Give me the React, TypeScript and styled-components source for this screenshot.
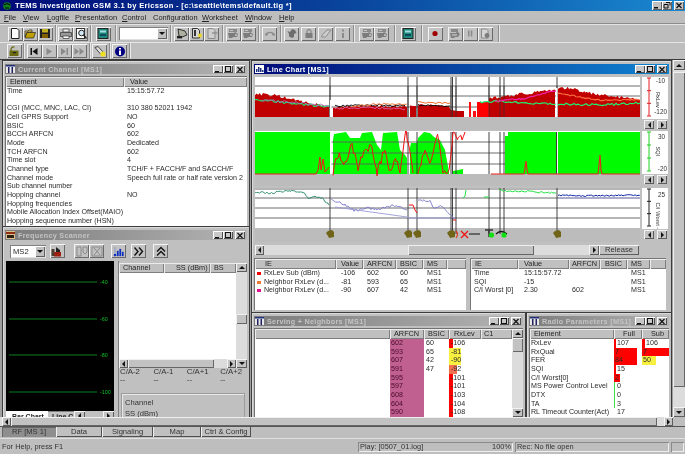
import React from "react";
import styled, { createGlobalStyle } from "styled-components";

const Global = createGlobalStyle`
  html, body { margin: 0; padding: 0; width: 685px; height: 454px; overflow: hidden; background: #c0c0c0; }
  #root { width: 685px; height: 454px; }
  * { box-sizing: border-box; }
`;

const Screen = styled.div`
  width: 685px; height: 454px; display: flex; flex-direction: column; background: #bebebe; overflow: hidden;
  font-family: "Liberation Sans", Arial, sans-serif; font-size: 7.1px; color: #2a2a2a; filter: blur(0.42px);
`;
const AppTitle = styled.div`
  height: 11px; flex: none; display: flex; align-items: center; padding-left: 3px; gap: 4px; color: #fff; font-weight: bold; font-size: 7.6px; letter-spacing: 0.3px;
  background: linear-gradient(90deg, #000a78 0%, #0a4aa0 55%, #1a88d0 100%);
`;
const AppTitleText = styled.span` flex: 1; white-space: nowrap; `;
const Controls = styled.div` display: flex; margin-right: 1px; `;
const CtrlBtn = styled.div<{ $gap?: number }>`
  width: 10px; height: 9px; margin-left: ${p => p.$gap ?? 0}px; background: #c0c0c0; display: flex; align-items: center; justify-content: center;
  box-shadow: inset 1px 1px #fff, inset -1px -1px #606060;
`;
const MenuBar = styled.div`
  height: 13px; flex: none; display: flex; align-items: center; padding-left: 4px; font-size: 7.5px; color: #222; border-bottom: 1px solid #8c8c8c;
`;
const MenuItem = styled.span<{ $w: number }>` width: ${p => p.$w}px; white-space: nowrap; flex: none; `;
const Underline = styled.u``;
const ToolRow = styled.div<{ $h: number }>`
  height: ${p => p.$h}px; flex: none; display: flex; align-items: center; padding-left: 5px; border-top: 1px solid #e4e4e4;
`;
const Group = styled.div<{ $w: number; $gap?: number; $plain?: boolean }>`
  width: ${p => p.$w}px; height: 100%; display: flex; align-items: center; justify-content: center; gap: ${p => p.$gap ?? 0}px; flex: none;
  ${p => (p.$plain ? "" : "border-right: 1px solid #8e8e8e; box-shadow: 1px 0 #e8e8e8;")}
`;
const Tool = styled.div`
  width: 15px; height: 14px; display: flex; align-items: center; justify-content: center; flex: none; background: #c2c2c2;
  box-shadow: inset 1px 1px #f4f4f4, inset -1px -1px #6a6a6a;
`;
const ToolSpacer = styled.div` width: 5px; `;
const Combo = styled.div<{ $w: number }>`
  width: ${p => p.$w}px; height: 13px; background: #fff; display: flex; align-items: center; justify-content: flex-end; padding-left: 3px; flex: none; font-size: 7.6px;
  box-shadow: inset 1px 1px #808080, inset -1px -1px #e0e0e0;
`;
const ComboText = styled.span` flex: 1; `;
const ComboArrow = styled.div`
  width: 10px; height: 11px; margin-right: 1px; background: #c0c0c0; display: flex; align-items: center; justify-content: center; box-shadow: inset 1px 1px #fff, inset -1px -1px #606060;
`;

const Workspace = styled.div` flex: none; height: 367px; display: flex; flex-direction: column; border-top: 1px solid #3a3a3a; `;
const WorkRow = styled.div` flex: 1; display: flex; min-height: 0; `;
const Canvas = styled.div` position: relative; width: 673px; height: 100%; background: #a0a0a0; overflow: hidden; `;
const MdiWindow = styled.div<{ $l: number; $t: number; $w: number; $h: number }>`
  position: absolute; left: ${p => p.$l}px; top: ${p => p.$t}px; width: ${p => p.$w}px; height: ${p => p.$h}px;
  border: 1px solid #3c3c3c; padding: 3px 2px 2px; background: #c0c0c0; display: flex; flex-direction: column; overflow: hidden;
  box-shadow: inset 1px 1px #dadada;
`;
const TitleBar = styled.div<{ $active?: boolean }>`
  height: 10px; flex: none; display: flex; align-items: center; padding: 0 1px; gap: 3px; font-weight: bold; font-size: 7.2px; letter-spacing: 0.3px; white-space: nowrap;
  color: ${p => (p.$active ? "#fff" : "#c4c4c4")};
  background: ${p => (p.$active ? "linear-gradient(90deg,#000a78,#1084d0)" : "linear-gradient(90deg,#7c7c7c,#b4b4b4)")};
`;
const TitleText = styled.span` flex: 1; overflow: hidden; `;
const WinBtns = styled.div` display: flex; gap: 0; margin-right: 1px; `;
const WinBtn = styled.div<{ $gap?: number }>`
  width: 10px; height: 8px; margin-left: ${p => p.$gap ?? 0}px; background: #c8c8c8; display: flex; align-items: center; justify-content: center; box-shadow: inset 1px 1px #fff, inset -1px -1px #505050;
`;

const HeadRow = styled.div` height: 10px; flex: none; display: flex; background: #c0c0c0; `;
const HeadCell = styled.div<{ $w?: number; $pl?: number; $center?: boolean }>`
  ${p => (p.$w ? `width:${p.$w}px;flex:none;` : "flex:1;")} padding-left: ${p => p.$pl ?? 3}px; line-height: 10px; white-space: nowrap; overflow: hidden;
  text-align: ${p => (p.$center ? "center" : "left")}; box-shadow: inset 1px 1px #ececec, inset -1px -1px #7e7e7e; color: #252525; font-size: 7.3px;
`;
const WhiteList = styled.div` flex: 1; background: #fff; min-height: 0; overflow: hidden; `;
const Inset = styled.div` margin-top: 2px; flex: 1; display: flex; flex-direction: column; border-left: 1px solid #707070; border-top: 1px solid #707070; min-height: 0; overflow: hidden; `;
const Row = styled.div` height: 8.67px; display: flex; line-height: 8.67px; white-space: nowrap; `;
const Cell = styled.div<{ $w?: number; $pl?: number; $color?: string }>`
  ${p => (p.$w ? `width:${p.$w}px;flex:none;` : "flex:1;")} padding-left: ${p => p.$pl ?? 0}px; color: ${p => p.$color ?? "#2a2a2a"}; overflow: hidden;
`;

/* Frequency scanner */
const FreqBar = styled.div` height: 18px; margin-top: 2px; flex: none; display: flex; align-items: center; padding-left: 5px; `;
const FreqBody = styled.div` flex: 1; display: flex; min-height: 0; margin-top: 1px; `;
const FreqLeft = styled.div` width: 108px; margin-left: 1px; flex: none; display: flex; flex-direction: column; `;
const ScanPlot = styled.svg` display: block; flex: none; `;
const SubTabs = styled.div` flex: none; height: 9px; display: flex; background: #c0c0c0; align-items: stretch; `;
const SubTab = styled.div<{ $w: number; $on?: boolean }>`
  width: ${p => p.$w}px; flex: none; font-size: 7px; padding-left: ${p => (p.$on ? 6 : 4)}px; line-height: 9px; white-space: nowrap; overflow: hidden;
  font-weight: bold; background: ${p => (p.$on ? "#fff" : "#c4c4c4")}; color: #222; border-top: 1px solid ${p => (p.$on ? "#fff" : "#808080")};
`;
const Splitter = styled.div` width: 5px; flex: none; border-right: 1px solid #808080; `;
const FreqRight = styled.div` flex: 1; display: flex; flex-direction: column; min-width: 0; `;
const ScanTableWrap = styled.div` height: 105px; flex: none; display: flex; margin-top: 2px; `;
const ScanTable = styled.div` flex: 1; display: flex; flex-direction: column; min-width: 0; `;
const CARow = styled.div` display: flex; height: 8px; line-height: 8px; flex: none; color: #333; padding-left: 1px; font-size: 7.8px; `;
const CACell = styled.div` width: 33.4px; flex: none; white-space: nowrap; `;
const GroupBox = styled.div` margin: 9px 2px 0 2px; height: 60px; flex: none; border: 1px solid #9c9c9c; box-shadow: inset 1px 1px #e8e8e8; padding: 4px 3px; line-height: 10.5px; color: #333; font-size: 7.6px; `;

/* scrollbars */
const VBar = styled.div<{ $w?: number }>` width: ${p => p.$w ?? 11}px; flex: none; display: flex; flex-direction: column; background: #dcdcdc; `;
const HBar = styled.div<{ $h?: number }>` height: ${p => p.$h ?? 9}px; flex: none; display: flex; background: #dcdcdc; `;
const MainHBar = styled(HBar)` padding-left: 2px; background: linear-gradient(#dcdcdc, #dcdcdc) no-repeat 0 0 / 673px 100%, #bebebe; `;
const Corner = styled.div` width: 12px; flex: none; `;
const Arrow = styled.div<{ $s?: number; $s2?: number }>`
  width: ${p => p.$s ?? 10}px; height: ${p => p.$s2 ?? 9}px; flex: none; background: #c2c2c2; display: flex; align-items: center; justify-content: center; box-shadow: inset 1px 1px #f4f4f4, inset -1px -1px #5c5c5c;
`;
const Thumb = styled.div<{ $w?: number; $h?: number; $ml?: number; $mt?: number }>`
  ${p => (p.$w ? `width:${p.$w}px;` : "")} ${p => (p.$h ? `height:${p.$h}px;` : "")} margin-left: ${p => p.$ml ?? 0}px; margin-top: ${p => p.$mt ?? 0}px; flex: none; background: #c2c2c2; box-shadow: inset 1px 1px #f0f0f0, inset -1px -1px #666;
`;
const Track = styled.div` flex: 1; `;

/* line chart */
const ChartRow = styled.div<{ $mt?: number }>` display: flex; margin-top: ${p => p.$mt ?? 0}px; margin-left: 1px; flex: none; `;
const Plot = styled.svg` display: block; flex: none; `;
const AxisCol = styled.div` margin-left: 2px; width: 26px; flex: none; display: flex; flex-direction: column; `;
const AxisBox = styled.svg` display: block; flex: none; background: #fff; `;
const Spin = styled.div` flex: 1; display: flex; gap: 3px; padding: 1px 0 0 2px; `;
const ChartScroll = styled.div` height: 10px; margin-top: 3px; flex: none; display: flex; margin-left: 1px; margin-right: 30px; background: #dcdcdc; `;
const ReleaseBtn = styled.div`
  width: 40px; height: 10px; flex: none; text-align: center; line-height: 10px; background: #c2c2c2; box-shadow: inset 1px 1px #f4f4f4, inset -1px -1px #5c5c5c; color: #333; font-size: 7.6px;
`;
const Panes = styled.div` flex: 1; display: flex; margin-top: 3px; min-height: 0; `;
const Pane = styled.div<{ $w: number }>` width: ${p => p.$w}px; flex: none; display: flex; flex-direction: column; background: #fff; border-left: 1px solid #777; border-top: 1px solid #777; margin-right: 4px; `;
const Swatch = styled.div<{ $c: string }>` width: 4px; height: 3px; margin: 3px 1px 0 2px; flex: none; background: ${p => p.$c}; `;

/* serving / radio */
const BodyRow = styled.div` flex: 1; display: flex; min-height: 0; margin-top: 2px; border-left: 1px solid #707070; border-top: 1px solid #707070; `;
const TableCol = styled.div` flex: 1; display: flex; flex-direction: column; min-width: 0; `;
const ArfcnCell = styled.div` width: 34px; flex: none; background: #c06090; padding-left: 1px; color: #4a0a2a; `;
const ValueBar = styled.div<{ $w: number; $c: string }>`
  width: ${p => p.$w}px; height: 100%; flex: none; background: ${p => p.$c};
`;
const BarCell = styled.div<{ $w: number }>` position: relative; width: ${p => p.$w}px; flex: none; overflow: hidden; `;
const BarText = styled.span<{ $l: number }>` position: absolute; left: ${p => p.$l}px; top: 0; color: #2a2a2a; `;

/* bottom */
const BottomTabs = styled.div` height: 11px; flex: none; display: flex; padding-left: 2px; border-top: 1px solid #555; `;
const BottomTab = styled.div<{ $w: number; $on?: boolean }>`
  width: ${p => p.$w}px; flex: none; text-align: center; line-height: 10px; color: #333; font-size: 7.6px;
  background: ${p => (p.$on ? "#8e8e8e" : "#c0c0c0")};
  box-shadow: ${p => (p.$on ? "inset 1px 1px #666" : "inset 1px 0 #f0f0f0, inset -1px -1px #505050")};
`;
const StatusBar = styled.div` height: 16px; flex: none; display: flex; align-items: flex-start; padding: 3px 2px 0 2px; border-top: 1px solid #e0e0e0; color: #333; margin-top: 1px; font-size: 7.4px; `;
const StatusText = styled.div` width: 354px; flex: none; `;
const StatusCell = styled.div<{ $w: number }>`
  width: ${p => p.$w}px; height: 10px; flex: none; line-height: 10px; padding: 0 2px; display: flex; justify-content: space-between; margin-left: 2px;
  box-shadow: inset 1px 1px #8a8a8a, inset -1px -1px #eee;
`;

/* ---- drawing helpers ---- */
type P = [number, number];
const rnd = (n: number) => { const s = Math.sin(n * 127.1 + 11.7) * 43758.5453; return s - Math.floor(s); };
const jag = (pts: P[], step: number, amp: number, seed = 1): P[] => {
  const out: P[] = [];
  for (let i = 0; i < pts.length - 1; i++) {
    const [x0, y0] = pts[i], [x1, y1] = pts[i + 1];
    for (let x = x0; x < x1; x += step) {
      const t = (x - x0) / (x1 - x0);
      out.push([x, y0 + (y1 - y0) * t + (rnd(x * seed + seed) - 0.5) * amp]);
    }
  }
  out.push(pts[pts.length - 1]);
  return out;
};
const lineD = (p: P[]) => "M" + p.map(q => `${q[0].toFixed(1)},${q[1].toFixed(1)}`).join("L");
const areaD = (p: P[], base: number) => `M${p[0][0]},${base}L` + p.map(q => `${q[0].toFixed(1)},${q[1].toFixed(1)}`).join("L") + `L${p[p.length - 1][0]},${base}Z`;

const events = [330, 408, 417, 451, 452.5, 456, 489, 500, 504, 557];
const Grid = ({ ys, top, bottom }: { ys: number[]; top: number; bottom: number }) => (
  <g>
    {ys.map(y => <line key={y} x1={255} x2={640} y1={y} y2={y} stroke="#5c5c5c" strokeWidth={0.9} />)}
    {events.map(x => <line key={x} x1={x} x2={x} y1={top} y2={bottom} stroke="#303030" strokeWidth={0.9} />)}
  </g>
);

const Chart1 = () => (
  <Plot width={385} height={53} viewBox="255 77 385 53">
    <rect x={255} y={77} width={385} height={40} fill="#fff" />
    <rect x={255} y={117} width={385} height={13} fill="#bcbcbc" />
    <Grid ys={[86, 96, 107]} top={77} bottom={117} />
    <path d={areaD(jag([[255, 94], [270, 95], [280, 96], [295, 100], [310, 103], [329, 107]], 1.6, 3, 3), 117)} fill="#c00000" />
    <path d={areaD(jag([[333, 107], [360, 106], [407, 107]], 1.6, 2, 4), 117)} fill="#c00000" />
    <path d={areaD(jag([[410, 106], [416, 106]], 1.6, 1, 4), 117)} fill="#c00000" />
    <path d={areaD(jag([[418, 105], [440, 105], [449, 106]], 1.6, 2, 5), 117)} fill="#c00000" />
    <path d={areaD([[449, 107], [451, 110], [457, 111], [464, 111]], 117)} fill="#c00000" />
    <rect x={469} y={102} width={2} height={15} fill="#ff1010" />
    <rect x={473} y={111} width={3} height={6} fill="#ff1010" />
    <rect x={477} y={102} width={12} height={15} fill="#ff0000" />
    <path d={areaD(jag([[489, 98], [500, 97], [520, 94], [540, 92], [555, 90]], 1.6, 3, 6), 117)} fill="#c00000" />
    <path d={areaD(jag([[558, 89], [570, 88], [585, 92], [600, 95], [620, 97], [640, 100]], 1.6, 3, 7), 117)} fill="#c00000" />
    {events.map(x => <line key={x} x1={x} x2={x} y1={86} y2={117} stroke="#303030" strokeWidth={0.7} />)}
    <rect x={330} y={100} width={1.5} height={17} fill="#fff" />
    <rect x={556} y={88} width={1.5} height={29} fill="#fff" />
    <path d={lineD(jag([[255, 99], [270, 101], [300, 104], [329, 107]], 2, 2.5, 8))} stroke="#20e070" strokeWidth={1.1} fill="none" />
    <path d={lineD(jag([[262, 100], [300, 103], [329, 106]], 2, 2.5, 9))} stroke="#b070c8" strokeWidth={0.8} fill="none" />
    <path d={lineD(jag([[335, 106], [380, 105], [405, 106]], 2, 2, 10))} stroke="#000" strokeWidth={0.9} fill="none" />
    <path d={lineD(jag([[335, 108], [380, 108], [405, 109]], 2, 2, 11))} stroke="#e070c0" strokeWidth={0.8} fill="none" />
    <path d={lineD(jag([[352, 106], [380, 104], [407, 104]], 2, 1.8, 12))} stroke="#f07030" strokeWidth={0.9} fill="none" />
    <path d={lineD(jag([[418, 102], [430, 103], [450, 103]], 2, 1.5, 13))} stroke="#f07030" strokeWidth={1} fill="none" />
    <path d={lineD(jag([[418, 105], [440, 106], [450, 106]], 2, 1.6, 14))} stroke="#000" strokeWidth={0.9} fill="none" />
    <path d={lineD(jag([[480, 102], [500, 101], [520, 103], [556, 104]], 2, 1.8, 15))} stroke="#20f070" strokeWidth={1.2} fill="none" />
    <path d={lineD(jag([[495, 101], [522, 99], [535, 96], [550, 91], [556, 91]], 2, 1.4, 16))} stroke="#f020a0" strokeWidth={1.3} fill="none" />
    <path d={lineD(jag([[558, 93], [585, 98], [600, 100], [640, 100]], 2, 1.5, 17))} stroke="#ff7040" strokeWidth={1.1} fill="none" />
    <path d={lineD(jag([[558, 104], [600, 105], [640, 103]], 2, 2.2, 18))} stroke="#20f070" strokeWidth={1.2} fill="none" />
  </Plot>
);

const redA = jag([[333, 172], [338, 155], [345, 165], [352, 145], [358, 170], [364, 150], [372, 148], [377, 172], [385, 150], [390, 172], [396, 160], [400, 172], [406, 132], [408, 142], [413, 173]], 1.4, 9, 21);
const redB = jag([[418, 172], [425, 150], [430, 165], [438, 135], [443, 172], [449, 170], [453, 133], [458, 137], [462, 137], [465, 132]], 1.5, 6, 22);
const Chart2 = () => (
  <Plot width={385} height={55} viewBox="255 131 385 55">
    <rect x={255} y={131} width={385} height={43} fill="#fff" />
    <rect x={255} y={174} width={385} height={12} fill="#bcbcbc" />
    <path d={areaD([[333, 140], [334, 134], [346, 132], [350, 138], [360, 138], [362, 133], [372, 132], [377, 145], [381, 150], [383, 133], [397, 132], [400, 150], [405, 155], [407, 158]], 174)} fill="#00fb00" />
    <path d={areaD([[410, 148], [411, 143], [417, 143], [418, 138], [424, 132], [430, 133], [434, 137], [440, 140], [445, 150], [449, 172]], 174)} fill="#00fb00" />
    <path d="M453,171L463,169L463,174L453,174Z" fill="#00fb00" />
    <Grid ys={[142, 153, 164]} top={132} bottom={174} />
    <rect x={255} y={132} width={75} height={42} fill="#00fb00" />
    <path d="M505,136L508,136L508,132L556,132L556,174L505,174Z" fill="#00fb00" />
    <rect x={558} y={132} width={82} height={42} fill="#00fb00" />
    <rect x={330} y={132} width={1.5} height={42} fill="#fff" />
    <rect x={557} y={132} width={1} height={42} fill="#fff" />
    <line x1={556.5} x2={556.5} y1={132} y2={174} stroke="#303030" strokeWidth={0.9} />
    <path d="M255,174L316,174L318,170L320,157L321,170L323,159L325,172L327,170L329,167" stroke="#f01818" strokeWidth={1} fill="none" />
    <path d={lineD(redA)} stroke="#f01010" strokeWidth={1} fill="none" />
    <path d={lineD(redB)} stroke="#f01010" strokeWidth={1} fill="none" />
    <path d="M491,174L524,174L526,161L527,170L528,174L598,174L600,155L601,170L602,174L640,174" stroke="#f02020" strokeWidth={1.1} fill="none" />
  </Plot>
);

const Blob = ({ x }: { x: number }) => (
  <path d={`M${x - 4},${233}L${x - 2},${231}L${x + 2},${230}L${x + 4},${232}L${x + 4},${237}L${x - 1},${238}L${x - 2},${236}Z`} fill="#706418" />
);
const Chart3 = () => (
  <Plot width={385} height={54} viewBox="255 188 385 54">
    <rect x={255} y={188} width={385} height={40} fill="#fff" />
    <rect x={255} y={228} width={385} height={14} fill="#bcbcbc" />
    <Grid ys={[189, 198, 208, 218]} top={188} bottom={234} />
    <path d={lineD(jag([[255, 192], [270, 193], [290, 191], [303, 192], [308, 198], [315, 197], [322, 198], [329, 205]], 1.5, 2, 31))} stroke="#208860" strokeWidth={0.9} fill="none" />
    <path d={lineD(jag([[331, 199], [345, 205], [355, 211], [365, 208], [380, 209], [390, 206], [400, 207], [407, 210]], 1.5, 2.6, 32))} stroke="#7878cc" strokeWidth={0.9} fill="none" />
    <path d="M335,207L407,217L409,218L450,218" stroke="#9a9ad8" strokeWidth={0.9} fill="none" />
    <path d="M409,205L413,205L415,210L417,213" stroke="#f01010" strokeWidth={1} fill="none" />
    <path d={lineD(jag([[418, 200], [430, 201], [433, 208], [442, 206], [450, 215], [455, 219]], 1.5, 1.6, 33))} stroke="#7878cc" strokeWidth={0.9} fill="none" />
    <path d="M453,220L456,220" stroke="#f01010" strokeWidth={1} fill="none" />
    <path d="M463,198L465,196L466,190" stroke="#20e040" strokeWidth={1} fill="none" />
    <path d="M484,197L489,197" stroke="#20e040" strokeWidth={1} fill="none" />
    <path d={lineD(jag([[499, 190], [505, 191], [520, 191], [556, 193]], 1.5, 1.8, 34))} stroke="#20e040" strokeWidth={1} fill="none" />
    <path d={lineD(jag([[558, 195], [575, 196], [640, 195]], 1.5, 1.5, 35))} stroke="#1028a8" strokeWidth={1} fill="none" />
    <path d="M558,198L640,198" stroke="#a4a4e0" strokeWidth={1} fill="none" />
    {[330, 408, 417, 557].map(x => <Blob key={x} x={x} />)}
    <Blob x={451} />
    <path d="M456,231Q459,234 456,238" stroke="#e03010" strokeWidth={1.1} fill="none" />
    <path d="M461,238L468,231M461,231L468,238" stroke="#f01010" strokeWidth={1.2} />
    <path d="M469,234L480,234" stroke="#111" strokeWidth={1} />
    <path d="M485,230L493,230M489,230L489,237" stroke="#333" strokeWidth={1.5} />
    <circle cx={491.5} cy={235} r={2.6} fill="#10e010" />
    <path d="M496,234Q501,229 507,234" stroke="#111" strokeWidth={1.2} fill="none" />
    <circle cx={504} cy={235} r={2.6} fill="#10e010" />
  </Plot>
);

const Axis = ({ h, color, top, bottom, label, topY, bottomY }: { h: number; color: string; top: string; bottom: string; label: string; topY: number; bottomY: number }) => (
  <AxisBox width={26} height={h} viewBox={`0 0 26 ${h}`}>
    <line x1={7} x2={7} y1={1} y2={h - 3} stroke={color} />
    {[0, 1, 2, 3].map(i => <line key={i} x1={5} x2={9} y1={1 + (i * (h - 4)) / 3} y2={1 + (i * (h - 4)) / 3} stroke={color} />)}
    <text x={23} y={topY} textAnchor="end" fontSize={6.4} fill="#333" fontFamily="Liberation Sans">{top}</text>
    <text x={25} y={bottomY} textAnchor="end" fontSize={6.4} fill="#333" fontFamily="Liberation Sans">{bottom}</text>
    <text transform={`translate(14,${h / 2 - 6}) rotate(90)`} fontSize={5.6} fill="#333" fontFamily="Liberation Sans">{label}</text>
  </AxisBox>
);

const Tri = ({ d, c = "#111" }: { d: "u" | "d" | "l" | "r"; c?: string }) => {
  const pts = { u: "0,3 3,0 6,3", d: "0,0 6,0 3,3", l: "3,0 3,6 0,3", r: "0,0 0,6 3,3" }[d];
  const w = d === "u" || d === "d" ? 6 : 3, h = d === "u" || d === "d" ? 3 : 6;
  return <svg width={w} height={h} viewBox={`0 0 ${w} ${h}`}><polygon points={pts} fill={c} /></svg>;
};
const Win = ({ k }: { k: "min" | "max" | "close" | "restore" }) => (
  <svg width={8} height={7} viewBox="0 0 8 7">
    {k === "min" && <rect x={1} y={5} width={4} height={1.5} fill="#111" />}
    {k === "max" && <rect x={1.5} y={0.5} width={5} height={5} fill="none" stroke="#111" />}
    {k === "restore" && <path d="M3,0.5H7V3.5M1,2.5H5V6H1Z" fill="none" stroke="#111" />}
    {k === "close" && <path d="M1.5,1L6.5,6M6.5,1L1.5,6" stroke="#111" strokeWidth={1.2} />}
  </svg>
);
const WinControls = () => (
  <WinBtns>
    <WinBtn><Win k="min" /></WinBtn><WinBtn><Win k="max" /></WinBtn><WinBtn $gap={2}><Win k="close" /></WinBtn>
  </WinBtns>
);
const TableIcon = () => (
  <svg width={9} height={8} viewBox="0 0 9 8"><rect width={9} height={8} fill="#e8e8e8" /><rect x={0} y={0} width={9} height={1.5} fill="#203080" /><rect x={2} y={2} width={1.5} height={6} fill="#202060" /><rect x={5.5} y={2} width={1.5} height={6} fill="#202060" /></svg>
);
const ChartIcon = () => (
  <svg width={9} height={8} viewBox="0 0 9 8"><rect width={9} height={8} fill="#fff" /><path d="M1,7V4H2.5V7ZM3,7V2H4.5V7ZM5,7V3H6.5V7ZM7,7V5H8.5V7Z" fill="#203080" /></svg>
);
const ScanIcon = () => (
  <svg width={9} height={8} viewBox="0 0 9 8"><rect width={9} height={8} fill="#d8c090" /><rect x={0} y={1} width={9} height={2} fill="#903010" /><rect x={1} y={4} width={7} height={3} fill="#302010" /></svg>
);

type IconName = "new" | "open" | "save" | "print" | "preview" | "panel" | "doc1" | "doc2" | "doc3" | "gear1" | "gear2" | "phone" | "tree" | "lock" | "erase" | "i" | "stop" | "rec" | "pause" | "file" | "openlock" | "first" | "play" | "step" | "ffwd" | "torch" | "info" | "filter" | "d1" | "d2" | "bars" | "next" | "up";
const Ic = ({ n }: { n: IconName }) => {
  const g = "#8a8a8a";
  return (
    <svg width={12} height={11} viewBox="0 0 12 11">
      {n === "new" && <path d="M2.5,0.5H8L10,2.5V10.5H2.5Z" fill="#fff" stroke="#222" />}
      {n === "open" && <g><path d="M1,3H4L5,2H8V4H3L1,9Z" fill="#e8d060" stroke="#222" strokeWidth={0.7} /><path d="M1,10L3,4.5H11.5L9.5,10Z" fill="#c0a000" stroke="#222" strokeWidth={0.7} /></g>}
      {n === "save" && <g><rect x={1} y={1} width={10} height={9} fill="#202020" /><rect x={3} y={1} width={6} height={3.5} fill="#c0b020" /><rect x={3} y={6} width={6} height={4} fill="#806000" /></g>}
      {n === "print" && <g><path d="M3,1H9V4H3Z" fill="#eee" stroke="#333" strokeWidth={0.7} /><path d="M0.5,4.5H11.5V8.5H0.5Z" fill="#999" stroke="#333" strokeWidth={0.7} /><path d="M3,8H9V10.5H3Z" fill="#fff" stroke="#333" strokeWidth={0.7} /></g>}
      {n === "preview" && <g><rect x={1.5} y={0.5} width={8} height={10} fill="#fff" stroke="#333" /><circle cx={6.5} cy={5} r={2.8} fill="#cfe8f4" stroke="#202020" /><path d="M8.5,7L11.5,10.5" stroke="#202020" strokeWidth={1.4} /></g>}
      {n === "panel" && <g><rect x={1} y={0.5} width={10} height={10} fill="#208878" stroke="#222" /><rect x={3} y={2.5} width={6} height={2} fill="#a0e0e0" /><rect x={3} y={6} width={6} height={2} fill="#0c4c60" /></g>}
      {n === "doc1" && <g><path d="M2,1L9,3L11,7L6,9L3,8Z" fill="#b0b0a0" stroke="#222" strokeWidth={0.9} /><rect x={1} y={8} width={5} height={2.4} fill="#222" /></g>}
      {n === "doc2" && <g><path d="M1.5,0.5H6.5L8.5,2.5V10H1.5Z" fill="#d8d8d8" stroke="#333" /><rect x={3} y={2} width={2} height={6} fill="#333" /><circle cx={9} cy={7.5} r={2} fill="#e8d820" /></g>}
      {n === "doc3" && <g><path d="M2,0.5H7L9,2.5V10.5H2Z" fill="#cfcfcf" stroke={g} /><path d="M6,5H11.5" stroke={g} strokeWidth={1.3} /></g>}
      {(n === "gear1" || n === "gear2") && <g><rect x={2} y={1} width={8} height={3} fill={g} /><path d="M1,5H7L8,4L11,6L10,9H6L5,10H2Z" fill="#7c7c7c" /><rect x={3} y={2} width={3} height={1} fill="#c8c8c8" /><circle cx={9} cy={7} r={1} fill="#c8c8c8" /></g>}
      {n === "phone" && <path d="M1,6Q6,1.5 11,6L11,7.5L8.5,7.5L8,5.5Q6,4.5 4,5.5L3.5,7.5L1,7.5Z" fill={g} />}
      {n === "tree" && <path d="M1.5,3L4,4L6,1L9,2L10.5,5L8,6L8,9L6,10L3,8.5L3,6Z" fill="#6e6e6e" />}
      {n === "lock" && <g><path d="M4,5V3Q6,0 8,3V5" stroke={g} fill="none" strokeWidth={1.3} /><rect x={2.5} y={5} width={7} height={5} fill="#7c7c7c" /></g>}
      {n === "erase" && <g><path d="M1.5,8L7,2H11L5.5,9H2Z" fill="#d0d0d0" stroke={g} /></g>}
      {n === "i" && <path d="M5,1.5H7V3.5H5ZM5,5H7V10H5Z" fill={g} />}
      {n === "stop" && <g><rect x={2} y={1} width={7} height={3} fill={g} /><path d="M1,5H7L8,3L11,6L9,9H6L5,10H2Z" fill="#808080" /><path d="M3,7H8" stroke="#d8d8d8" /></g>}
      {n === "rec" && <circle cx={6} cy={5.5} r={2.6} fill="#a00000" />}
      {n === "pause" && <path d="M4,2.5H5.5V8.5H4ZM6.8,2.5H8.3V8.5H6.8Z" fill={g} />}
      {n === "file" && <g><path d="M2.5,1H7.5L9,2.5V10H2.5Z" fill="#d4d4d4" stroke={g} /><circle cx={8} cy={7.5} r={2.4} fill="#7c7c7c" /></g>}
      {n === "openlock" && <g><path d="M3,5V3Q4,0.5 6.5,1" stroke="#6a6a10" fill="none" strokeWidth={1.2} /><rect x={1.5} y={4.5} width={9} height={5.5} fill="#6a6a10" /><rect x={5} y={6} width={3} height={1.2} fill="#222" /></g>}
      {n === "first" && <path d="M2.5,2H4V9H2.5ZM9.5,2V9L4.5,5.5Z" fill="#111" />}
      {n === "play" && <path d="M3.5,2V9L9,5.5Z" fill={g} />}
      {n === "step" && <path d="M3,2V9L8,5.5ZM8.5,2H10V9H8.5Z" fill={g} />}
      {n === "ffwd" && <path d="M1.5,2V9L6,5.5ZM6.5,2V9L11,5.5Z" fill={g} />}
      {n === "torch" && <g><path d="M1,1.5L4,0.5L9,6L6.5,8Z" fill="#e0e0e0" stroke="#222" strokeWidth={0.8} /><circle cx={9} cy={8} r={2.6} fill="#f0e020" /></g>}
      {n === "info" && <g><circle cx={6} cy={5.5} r={5} fill="#000080" /><path d="M5,2H7V3.6H5ZM5,4.6H7V9H5Z" fill="#fff" /></g>}
      {n === "filter" && <g><path d="M5,1L9,4V6H5Z" fill="#222" /><rect x={3} y={6} width={7} height={4.5} fill="#a02010" /><rect x={0.5} y={3} width={3} height={7} fill="#504030" /></g>}
      {n === "d1" && <path d="M1,1H5V10H1ZM7,1H11V6L9,8L7,6Z" fill="none" stroke={g} />}
      {n === "d2" && <path d="M1,1H11V10H1ZM3,2L9,9M9,2L3,9" fill="none" stroke={g} />}
      {n === "bars" && <path d="M1,8H3V10H1ZM2,1V7M4,5H5.5V10H4ZM6.5,3H8V10H6.5ZM9,6H10.5V10H9Z" fill="#1030c0" stroke="#1030c0" strokeWidth={0.3} />}
      {n === "next" && <path d="M1.5,1.5L5,5.5L1.5,9.5M6,1.5L9.5,5.5L6,9.5" fill="none" stroke="#111" strokeWidth={1.4} />}
      {n === "up" && <path d="M2,5.5L6,1.5L10,5.5M2,9.5L6,5.5L10,9.5" fill="none" stroke="#111" strokeWidth={1.4} />}
    </svg>
  );
};

const menu: [string, string, number][] = [
  ["F", "ile", 19], ["V", "iew", 24], ["L", "ogfile", 28], ["P", "resentation", 47], ["C", "ontrol", 31], ["", "Configuration", 49], ["W", "orksheet", 43], ["W", "indow", 34], ["H", "elp", 20],
];
const channelRows: [string, string][] = [
  ["Time", "15:15:57.72"], ["", ""], ["CGI (MCC, MNC, LAC, CI)", "310 380 52021 1942"], ["Cell GPRS Support", "NO"], ["BSIC", "60"], ["BCCH ARFCN", "602"], ["Mode", "Dedicated"], ["TCH ARFCN", "602"], ["Time slot", "4"], ["Channel type", "TCH/F + FACCH/F and SACCH/F"], ["Channel mode", "Speech full rate or half rate version 2"], ["Sub channel number", ""], ["Hopping channel", "NO"], ["Hopping frequencies", ""], ["Mobile Allocation Index Offset(MAIO)", ""], ["Hopping sequence number (HSN)", ""],
];
const serving: [string, string, string, number, string][] = [
  ["602", "60", "-106", 4, "#ff0000"], ["593", "65", "-81", 12, "#f8f040"], ["607", "42", "-90", 12, "#f8f040"], ["591", "47", "-92", 8, "#f07050"], ["595", "", "-101", 4, "#ff0000"], ["597", "", "-101", 4, "#ff0000"], ["608", "", "-103", 4, "#ff0000"], ["604", "", "-104", 4, "#ff0000"], ["590", "", "-108", 4, "#ff0000"],
];
const radio: [string, string, number, string, string, number, string][] = [
  ["RxLev", "107", 2, "#ff0000", "106", 3, "#ff0000"], ["RxQual", "7", 23, "#ff0000", "7", 28, "#ff0000"], ["FER", "84", 23, "#ff0000", "50", 14, "#f8f040"], ["SQI", "15", 2, "#ff0000", "", 0, ""], ["C/I Worst[0]", "2", 6, "#ff0000", "", 0, ""], ["MS Power Control Level", "0", 1, "#40e040", "", 0, ""], ["DTX", "0", 1, "#40e040", "", 0, ""], ["TA", "3", 1, "#40e040", "", 0, ""], ["RL Timeout Counter(Act)", "17", 0, "", "", 0, ""], ["RL Timeout Counter(Max)", "20", 0, "", "", 0, ""],
];

const Tools = ({ list }: { list: IconName[] }) => <>{list.map((n, i) => <Tool key={i}><Ic n={n} /></Tool>)}</>;

const AxisSpin = () => (
  <Spin><Arrow $s={10} $s2={9}><Tri d="l" /></Arrow><Arrow $s={10} $s2={9}><Tri d="r" /></Arrow></Spin>
);

export default function App() {
  return (
    <Screen>
      <Global />
      <AppTitle>
        <svg width={8} height={8} viewBox="0 0 8 8"><circle cx={4} cy={4} r={3.8} fill="#108020" /><path d="M1,3Q4,0 7,3M2,6H6" stroke="#000" fill="none" /></svg>
        <AppTitleText>TEMS Investigation GSM 3.1 by Ericsson - [c:\seattle\tems\default.tig *]</AppTitleText>
        <Controls>
          <CtrlBtn><Win k="min" /></CtrlBtn><CtrlBtn><Win k="restore" /></CtrlBtn><CtrlBtn $gap={2}><Win k="close" /></CtrlBtn>
        </Controls>
      </AppTitle>
      <MenuBar>
        {menu.map(([u, r, w], i) => <MenuItem key={i} $w={w}>{u && <Underline>{u}</Underline>}{r}</MenuItem>)}
      </MenuBar>
      <ToolRow $h={18}>
        <Group $w={51}><Tools list={["new", "open", "save"]} /></Group>
        <Group $w={35}><Tools list={["print", "preview"]} /></Group>
        <Group $w={25}><Tools list={["panel"]} /></Group>
        <Group $w={55}><Combo $w={49}><ComboText /><ComboArrow><Tri d="d" /></ComboArrow></Combo></Group>
        <Group $w={52}><Tools list={["doc1", "doc2", "doc3"]} /></Group>
        <Group $w={36}><Tools list={["gear1", "gear2"]} /></Group>
        <Group $w={22}><Tools list={["phone"]} /></Group>
        <Group $w={73} $gap={2}><Tools list={["tree", "lock", "erase", "i"]} /></Group>
        <Group $w={41}><Tools list={["gear1", "gear2"]} /></Group>
        <Group $w={27}><Tools list={["panel"]} /></Group>
        <Group $w={77}><Tools list={["rec"]} /><ToolSpacer /><Tools list={["stop", "pause", "file"]} /></Group>
      </ToolRow>
      <ToolRow $h={17}>
        <Group $w={19}><Tools list={["openlock"]} /></Group>
        <Group $w={66}><Tools list={["first", "play", "step", "ffwd"]} /></Group>
        <Group $w={20}><Tools list={["torch"]} /></Group>
        <Group $w={20}><Tools list={["info"]} /></Group>
      </ToolRow>

      <Workspace>
        <WorkRow>
          <Canvas>
            <MdiWindow $l={2} $t={0} $w={248} $h={169}>
              <TitleBar><TableIcon /><TitleText>Current Channel [MS1]</TitleText><WinControls /></TitleBar>
              <Inset>
                <HeadRow>
                  <HeadCell $w={118} $pl={4}>Element</HeadCell><HeadCell $pl={6}>Value</HeadCell>
                </HeadRow>
                <WhiteList>
                  {channelRows.map((r, i) => (
                    <Row key={i}><Cell $w={120} $pl={1}>{r[0]}</Cell><Cell $pl={1}>{r[1]}</Cell></Row>
                  ))}
                </WhiteList>
              </Inset>
            </MdiWindow>

            <MdiWindow $l={2} $t={166} $w={248} $h={196}>
              <TitleBar><ScanIcon /><TitleText>Frequency Scanner</TitleText><WinControls /></TitleBar>
              <FreqBar>
                <Combo $w={36}><ComboText>MS2</ComboText><ComboArrow><Tri d="d" /></ComboArrow></Combo>
                <Group $w={22} $plain><Tools list={["filter"]} /></Group>
                <Group $w={42} $plain><Tools list={["d1", "d2"]} /></Group>
                <Group $w={17} $plain><Tools list={["bars"]} /></Group>
                <Group $w={23} $plain><Tools list={["next"]} /></Group>
                <Group $w={21} $plain><Tools list={["up"]} /></Group>
              </FreqBar>
              <FreqBody>
                <FreqLeft>
                  <ScanPlot width={108} height={150} viewBox="0 0 108 150">
                    <rect width={108} height={150} fill="#000" />
                    {([["-40", 21], ["-60", 58], ["-80", 94], ["-100", 131]] as [string, number][]).map(([t, y]) => (
                      <g key={t}>
                        <line x1={3} x2={91} y1={y} y2={y} stroke="#0c8020" />
                        <text x={94} y={y + 2} fontSize={5.4} fill="#10c020" fontFamily="Liberation Sans">{t}</text>
                      </g>
                    ))}
                  </ScanPlot>
                  <SubTabs>
                    <SubTab $w={42} $on>Bar Chart</SubTab>
                    <SubTab $w={26}>Line Ch</SubTab>
                    <Arrow $s={11} $s2={9}><Tri d="l" /></Arrow>
                    <Track />
                    <Arrow $s={11} $s2={9}><Tri d="r" /></Arrow>
                  </SubTabs>
                </FreqLeft>
                <Splitter />
                <FreqRight>
                  <ScanTableWrap>
                    <ScanTable>
                      <HeadRow>
                        <HeadCell $w={45} $pl={4}>Channel</HeadCell><HeadCell $w={46} $pl={12}>SS (dBm)</HeadCell><HeadCell $pl={4}>BS</HeadCell>
                      </HeadRow>
                      <WhiteList />
                      <HBar $h={9}><Arrow $s={9}><Tri d="l" /></Arrow><Thumb $w={86} $h={9} /><Track /><Arrow $s={9}><Tri d="r" /></Arrow></HBar>
                    </ScanTable>
                    <VBar><Arrow $s={11}><Tri d="u" /></Arrow><Thumb $h={10} $mt={42} /><Track /><Arrow $s={11}><Tri d="d" /></Arrow></VBar>
                  </ScanTableWrap>
                  <CARow><CACell>C/A-2</CACell><CACell>C/A-1</CACell><CACell>C/A+1</CACell><CACell>C/A+2</CACell></CARow>
                  <CARow><CACell>--</CACell><CACell>--</CACell><CACell>--</CACell><CACell>--</CACell></CARow>
                  <GroupBox>Channel<br />SS (dBm)</GroupBox>
                </FreqRight>
              </FreqBody>
            </MdiWindow>

            <MdiWindow $l={251} $t={0} $w={421} $h={253}>
              <TitleBar $active><ChartIcon /><TitleText>Line Chart [MS1]</TitleText><WinControls /></TitleBar>
              <ChartRow $mt={3}>
                <Chart1 />
                <AxisCol><Axis h={42} color="#e02020" top="-10" bottom="-120" label="RxLev" topY={6} bottomY={37} /><AxisSpin /></AxisCol>
              </ChartRow>
              <ChartRow $mt={1}>
                <Chart2 />
                <AxisCol><Axis h={43} color="#20d020" top="30" bottom="-20" label="SQI" topY={8} bottomY={40} /><AxisSpin /></AxisCol>
              </ChartRow>
              <ChartRow $mt={2}>
                <Chart3 />
                <AxisCol><Axis h={41} color="#202020" top="25" bottom="" label="C/I Worst -5" topY={9} bottomY={38} /><AxisSpin /></AxisCol>
              </ChartRow>
              <ChartScroll>
                <Arrow $s={9} $s2={10}><Tri d="l" /></Arrow>
                <Thumb $w={126} $h={10} $ml={144} />
                <Track />
                <Arrow $s={10} $s2={10}><Tri d="r" /></Arrow>
                <ReleaseBtn>Release</ReleaseBtn>
              </ChartScroll>
              <Panes>
                <Pane $w={212}>
                  <HeadRow>
                    <HeadCell $w={81} $pl={10}>IE</HeadCell><HeadCell $w={27} $pl={5}>Value</HeadCell><HeadCell $w={33} $pl={4}>ARFCN</HeadCell><HeadCell $w={27} $pl={4}>BSIC</HeadCell><HeadCell $w={24} $pl={4}>MS</HeadCell><HeadCell />
                  </HeadRow>
                  <WhiteList>
                    {[["#f00000", "RxLev Sub (dBm)", "-106", "602", "60"], ["#f07830", "Neighbor RxLev (d...", "-81", "593", "65"], ["#e01090", "Neighbor RxLev (d...", "-90", "607", "42"]].map(r => (
                      <Row key={r[1] + r[2]}>
                        <Swatch $c={r[0]} /><Cell $w={74} $pl={2}>{r[1]}</Cell><Cell $w={27} $pl={5}>{r[2]}</Cell><Cell $w={33} $pl={4}>{r[3]}</Cell><Cell $w={27} $pl={4}>{r[4]}</Cell><Cell $w={24} $pl={4}>MS1</Cell>
                      </Row>
                    ))}
                  </WhiteList>
                </Pane>
                <Pane $w={196}>
                  <HeadRow>
                    <HeadCell $w={47} $pl={4}>IE</HeadCell><HeadCell $w={51} $pl={6}>Value</HeadCell><HeadCell $w={31} $pl={3}>ARFCN</HeadCell><HeadCell $w={27} $pl={5}>BSIC</HeadCell><HeadCell $w={23} $pl={4}>MS</HeadCell><HeadCell />
                  </HeadRow>
                  <WhiteList>
                    {[["Time", "15:15:57.72", ""], ["SQI", "-15", ""], ["C/I Worst [0]", "2.30", "602"]].map(r => (
                      <Row key={r[0]}>
                        <Cell $w={47} $pl={3}>{r[0]}</Cell><Cell $w={51} $pl={6}>{r[1]}</Cell><Cell $w={31} $pl={3}>{r[2]}</Cell><Cell $w={27} /><Cell $w={23} $pl={4}>MS1</Cell>
                      </Row>
                    ))}
                  </WhiteList>
                </Pane>
              </Panes>
            </MdiWindow>

            <MdiWindow $l={251} $t={252} $w={275} $h={108}>
              <TitleBar><TableIcon /><TitleText>Serving + Neighbors [MS1]</TitleText><WinControls /></TitleBar>
              <BodyRow>
                <TableCol>
                  <HeadRow>
                    <HeadCell $w={135} /><HeadCell $w={34} $pl={4}>ARFCN</HeadCell><HeadCell $w={25} $pl={4}>BSIC</HeadCell><HeadCell $w={32} $pl={5}>RxLev</HeadCell><HeadCell $pl={3}>C1</HeadCell>
                  </HeadRow>
                  <WhiteList>
                    {serving.map(r => (
                      <Row key={r[0]}>
                        <Cell $w={135} /><ArfcnCell>{r[0]}</ArfcnCell><Cell $w={25} $pl={2}>{r[1]}</Cell>
                        <BarCell $w={32}><ValueBar $w={r[3]} $c={r[4]} /><BarText $l={2}>{r[2]}</BarText></BarCell>
                      </Row>
                    ))}
                  </WhiteList>
                </TableCol>
                <VBar $w={11}><Arrow $s={11}><Tri d="u" /></Arrow><Thumb $h={14} /><Track /><Arrow $s={11}><Tri d="d" /></Arrow></VBar>
              </BodyRow>
            </MdiWindow>

            <MdiWindow $l={526} $t={252} $w={146} $h={108}>
              <TitleBar><TableIcon /><TitleText>Radio Parameters [MS1]</TitleText><WinControls /></TitleBar>
              <BodyRow>
                <TableCol>
                  <HeadRow>
                    <HeadCell $w={84} $pl={4}>Element</HeadCell><HeadCell $w={28} $pl={9}>Full</HeadCell><HeadCell $pl={9}>Sub</HeadCell>
                  </HeadRow>
                  <WhiteList>
                    {radio.map(r => (
                      <Row key={r[0]}>
                        <Cell $w={84} $pl={1}>{r[0]}</Cell>
                        <BarCell $w={28}><ValueBar $w={r[2]} $c={r[3]} /><BarText $l={r[2] > 3 ? 1 : 3}>{r[1]}</BarText></BarCell>
                        <BarCell $w={28}><ValueBar $w={r[5]} $c={r[6]} /><BarText $l={r[5] > 3 ? 1 : 4}>{r[4]}</BarText></BarCell>
                      </Row>
                    ))}
                  </WhiteList>
                </TableCol>
              </BodyRow>
            </MdiWindow>
          </Canvas>
          <VBar $w={12}><Arrow $s={12} $s2={10}><Tri d="u" /></Arrow><Thumb $h={315} $mt={2} /><Track /><Arrow $s={12} $s2={10}><Tri d="d" /></Arrow></VBar>
        </WorkRow>
        <MainHBar $h={9}>
          <Arrow $s={9}><Tri d="l" /></Arrow><Thumb $w={646} $h={9} /><Track /><Arrow $s={9}><Tri d="r" /></Arrow><Corner />
        </MainHBar>
      </Workspace>

      <BottomTabs>
        <BottomTab $w={54} $on>RF [MS 1]</BottomTab>
        <BottomTab $w={46}>Data</BottomTab>
        <BottomTab $w={51}>Signaling</BottomTab>
        <BottomTab $w={48}>Map</BottomTab>
        <BottomTab $w={50}>Ctrl &amp; Config</BottomTab>
      </BottomTabs>
      <StatusBar>
        <StatusText>For Help, press F1</StatusText>
        <StatusCell $w={155}><span>Play: [0507_01.log]</span><span>100%</span></StatusCell>
        <StatusCell $w={154}>Rec: No file open</StatusCell>
        <StatusCell $w={13} />
      </StatusBar>
    </Screen>
  );
}
